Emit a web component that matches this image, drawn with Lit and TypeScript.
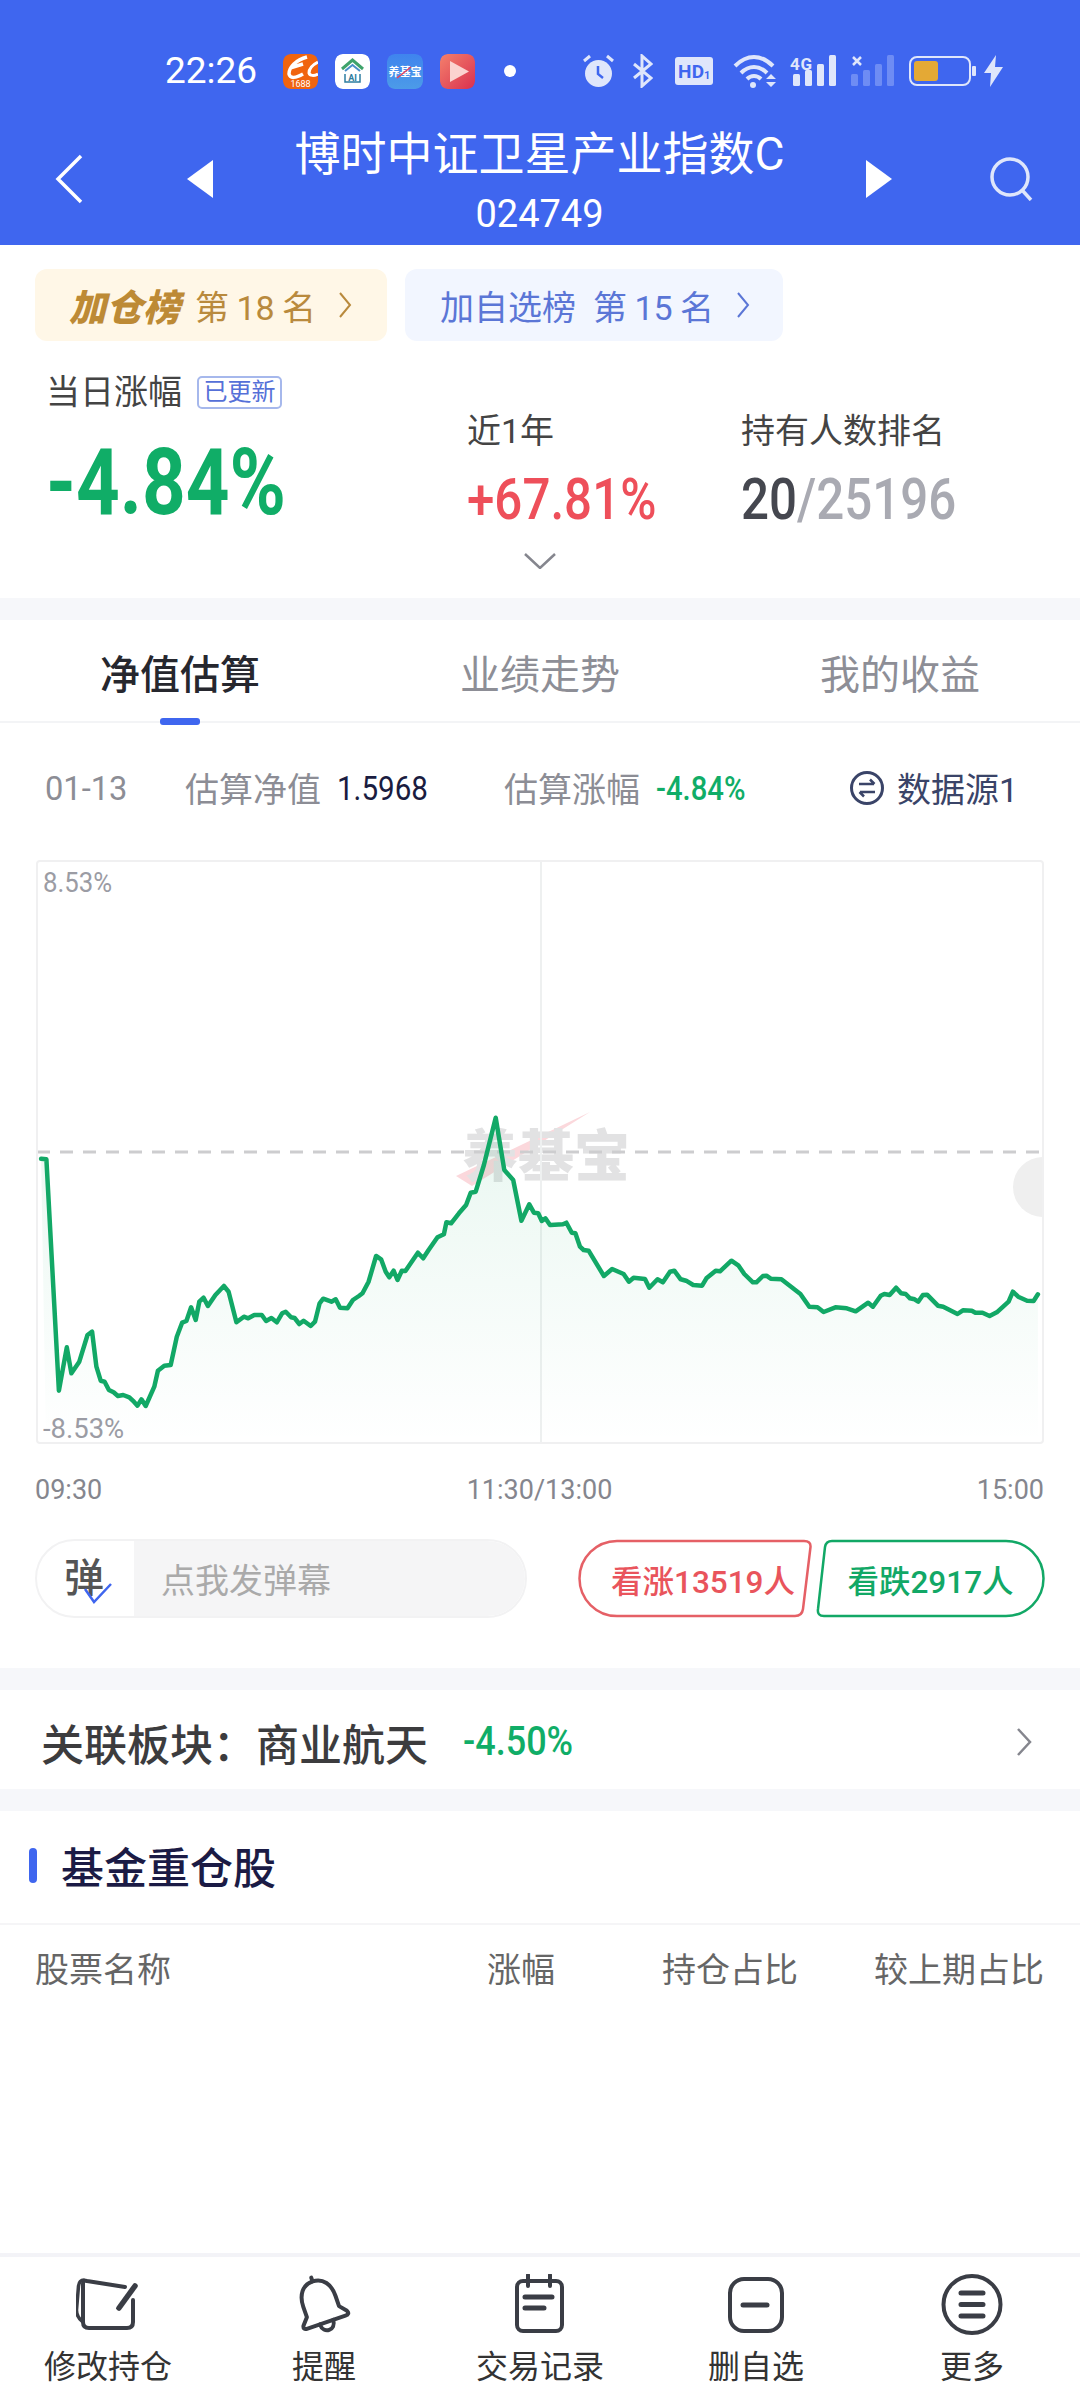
import { LitElement, html, css, svg } from "lit";
import { customElement } from "lit/decorators.js";

const a: number[][] = [[115,176],[130,178],[165,872],[187,742],[200,820],[222,785],[245,705],[258,695],[270,800],[282,842],[293,845],[305,870],[318,877],[330,888],[345,885],[362,892],[375,905],[385,917],[396,898],[408,918],[432,860],[442,812],[460,797],[478,795],[495,710],[510,668],[522,663],[535,622],[548,660],[558,605],[570,593],[582,618],[603,585],[627,558],[640,575],[662,667],[683,650],[695,655],[712,645],[733,645],[745,663],[760,654],[775,667],[790,640],[800,635],[815,652],[825,654],[838,672],[850,662],[870,678],[882,665],[895,610],[905,596],[928,605],[940,598],[952,623],[973,625],[988,600],[1005,588],[1015,580],[1032,545],[1053,468],[1067,478],[1080,515],[1090,532],[1102,512],[1113,540],[1125,512],[1135,513],[1150,490],[1170,458],[1185,475],[1200,450],[1225,412],[1243,403],[1250,367],[1263,370],[1285,340],[1305,315],[1318,278],[1332,275],[1355,195],[1388,53],[1412,210],[1437,240],[1460,362],[1482,313],[1495,338],[1507,340],[1517,363],[1527,355],[1540,375]];
const b: number[][] = [[85,375],[120,373],[130,368],[145,398],[155,400],[168,440],[178,450],[192,452],[235,528],[258,507],[290,522],[305,545],[318,533],[350,537],[362,563],[385,538],[400,547],[420,515],[432,512],[450,538],[465,542],[485,555],[510,557],[522,535],[548,512],[560,514],[592,482],[612,497],[628,522],[652,547],[662,547],[680,528],[690,527],[702,536],[732,538],[785,582],[810,620],[833,622],[850,636],[883,622],[915,625],[940,634],[975,608],[988,620],[1010,587],[1020,582],[1035,585],[1053,563],[1067,580],[1080,582],[1092,595],[1105,598],[1115,605],[1128,585],[1140,584],[1170,617],[1185,620],[1225,642],[1240,631],[1265,632],[1275,638],[1295,638],[1315,648],[1335,637],[1368,605],[1380,575],[1395,590],[1420,602],[1438,603],[1450,583]];
const pts = [
  ...a.map(([x, y]) => [x / 2.8, y / 3 + 1100]),
  ...b.map(([x, y]) => [x / 2.8 + 520, y / 3 + 1100]),
].map(([x, y]) => `${x.toFixed(1)},${y.toFixed(1)}`);
const linePts = pts.join(" ");
const areaPts = `46,1443 ${linePts} 1038,1443`;

const tabIcons = [
  svg`<path d="M58 26V48Q58 54 52 54H14Q8 54 8 48V10Q8 6 12 7L50 13"/><path d="M9 6C6 6 4 8 3.500 12L1.500 36Q1.500 43 8 48" stroke-width="3.500"/><path d="M60 12L44 34" stroke-width="5.500"/>`,
  svg`<g transform="rotate(-19 32 32)"><path d="M32 6C21 6 15 15 15 27V38L9 45Q7 49 12 49H52Q57 49 55 45L49 38V27C49 15 43 6 32 6Z"/><path d="M32 2V6"/><path d="M25 49C25 60 39 60 39 49"/></g>`,
  svg`<rect x="10" y="7" width="45" height="50" rx="6"/><path d="M21 1V12M43 1V12"/><path d="M18 23H45M18 34H37" stroke-width="5"/>`,
  svg`<rect x="7" y="5" width="52" height="52" rx="14"/><path d="M20 31H44" stroke-width="5"/>`,
  svg`<circle cx="32" cy="30.500" r="28.500"/><path d="M21 19H43M21 30.500H43M21 42H43" stroke-width="5"/>`,
];
const tabLabels = ["修改持仓", "提醒", "交易记录", "删自选", "更多"];
const tabBoxes = ["1 0 64 61", "3 0 64 61", "1 0 64 61", "1 0 64 61", "0 0 64 61"];
const relatedName = "关联板块\uFF1A商业航天";

@customElement("app-root")
export class AppRoot extends LitElement {
  static styles = css`
    :host { display: block; width: 1080px; height: 2400px; background: #fff; font-family: Roboto, "Noto Sans CJK SC", sans-serif; color: #333; overflow: hidden; }
    * { box-sizing: border-box; }
    .page { display: flex; flex-direction: column; height: 2400px; }
    .cond { display: inline-block; transform-origin: left center; white-space: nowrap; }
    svg { display: block; flex: none; }

    .header { background: #3f66ef; height: 245px; color: #fff; flex: none; }
    .status { height: 110px; padding: 32px 0 0 165px; display: flex; align-items: center; }
    .time { font-size: 37px; line-height: 36px; width: 118px; }
    .app { margin-right: 17px; border-radius: 8px; }
    .sys-dot { width: 12px; height: 12px; border-radius: 50%; background: #fff; margin: 0 67px 0 12px; }
    .nav { height: 135px; padding-top: 3px; display: flex; align-items: center; }
    .nav-l { display: flex; align-items: center; padding-left: 55px; gap: 104px; }
    .nav-r { display: flex; align-items: center; padding-right: 47px; gap: 98px; }
    .nav-t { flex: 1; text-align: center; padding-top: 7px; }
    .title { font-size: 46px; line-height: 50px; }
    .code { font-size: 38px; line-height: 44px; margin-top: 13px; }

    .chips { display: flex; gap: 18px; padding: 24px 36px 0 35px; flex: none; }
    .chip { height: 72px; border-radius: 12px; display: flex; align-items: center; font-size: 34px; }
    .chip.gold { width: 352px; background: #fff7e7; color: #b98a3d; padding-left: 34px; }
    .chip.blue { width: 378px; background: #f2f6ff; color: #5b76d6; padding-left: 35px; }
    .hot { font-style: italic; font-weight: 900; font-size: 37px; color: #bd8a35; margin-right: 15px; white-space: nowrap; }
    .rank { word-spacing: -1px; margin-left: 17px; white-space: nowrap; }
    .chip.gold .rank { margin-left: 0; }
    .chip svg { margin-left: 22px; }

    .hero { height: 257px; flex: none; overflow: hidden; }
    .hero-row { display: flex; height: 187px; }
    .hero-a { width: 467px; padding: 33px 0 0 46px; }
    .hero-b { width: 274px; padding-top: 72px; }
    .hero-c { padding-top: 72px; }
    .lbl { font-size: 34px; line-height: 36px; color: #444; white-space: nowrap; }
    .lbl-row { display: flex; align-items: center; }
    .badge { margin-left: 15px; border: 2px solid #a6b8ec; border-radius: 5px; font-size: 24px; line-height: 29px; height: 33px; width: 85px; text-align: center; color: #5570d8; }
    .big { font-size: 93px; line-height: 90px; margin-top: 28px; font-weight: 700; color: #10ad67; transform: scaleX(.82); }
    .mid { font-size: 58px; line-height: 54px; margin-top: 23px; font-weight: 500; transform: scaleX(.85); }
    .red { color: #ee4f5a; }
    .dark { color: #45474f; }
    .grey { color: #a9aab2; }
    .more { margin: 25px auto 0; }

    .gap { height: 22px; background: #f6f7fa; flex: none; }

    .tabs { height: 103px; border-bottom: 2px solid #f3f4f6; display: grid; grid-template-columns: repeat(3, 360px); font-size: 40px; color: #8d8e96; flex: none; }
    .tab { position: relative; display: flex; align-items: center; justify-content: center; padding-top: 2px; }
    .tab.on { color: #26272e; font-weight: 500; }
    .tab.on::after { content: ""; position: absolute; left: 160px; bottom: -4px; width: 40px; height: 7px; border-radius: 3px; background: #3f66ef; }

    .info { height: 137px; padding: 0 62px 8px 45px; display: flex; align-items: center; font-size: 34px; color: #8c8d95; flex: none; }
    .d { width: 140px; transform: scaleX(.96); }
    .k { width: 152px; }
    .v { width: 167px; color: #1a1c40; transform: scaleX(.87); }
    .p { width: 100px; color: #10ad67; font-weight: 500; transform: scaleX(.86); }
    .src { margin-left: auto; display: flex; align-items: center; gap: 12px; color: #3a4468; }

    .chart { position: relative; width: 1008px; height: 584px; margin: 0 36px; border: 2px solid #f0f0f1; border-radius: 4px; overflow: hidden; flex: none; }
    .chart svg { position: absolute; left: -2px; top: -2px; }
    .yl { position: absolute; left: 5px; font-size: 28px; line-height: 32px; color: #9b9ca4; transform-origin: left center; }
    .yl.top { top: 5px; transform: scaleX(.92); }
    .yl.bot { bottom: -3px; transform: scaleX(.98); }
    .wm { font-family: "Noto Sans CJK SC", sans-serif; font-size: 56px; font-weight: 900; fill: #e2e2e3; }
    .x { display: flex; justify-content: space-between; padding: 0 36px 0 35px; margin-top: 28px; font-size: 27px; line-height: 36px; color: #85868e; flex: none; }

    .act { display: flex; gap: 49px; padding: 0 35px; margin: 31px 0 50px; height: 79px; flex: none; }
    .dm { width: 492px; display: flex; border: 2px solid #f2f2f3; border-radius: 40px; overflow: hidden; flex: none; }
    .dm-i { width: 97px; position: relative; font-size: 40px; font-weight: 500; color: #555; padding-left: 27px; line-height: 75px; }
    .dm-i svg { position: absolute; left: 46px; top: 42px; }
    .dm-t { flex: 1; background: #f5f5f6; font-size: 34px; color: #aaa; display: flex; align-items: center; padding-left: 27px; }
    .vote { display: flex; gap: 4px; }
    .btn { position: relative; height: 79px; display: flex; align-items: center; justify-content: center; font-size: 31.500px; font-weight: 500; white-space: nowrap; }
    .btn svg { position: absolute; left: 0; top: 0; }
    .btn span { position: relative; }
    .btn.up { width: 236px; color: #e9545c; padding-left: 18px; }
    .btn.dn { width: 229px; color: #12a866; }

    .rel { height: 99px; padding: 4px 48px 0 41px; display: flex; align-items: center; font-size: 43px; font-weight: 500; color: #3c3c3e; flex: none; position: relative; }
    .rel .pc { margin-left: 35px; width: 130px; font-size: 40px; color: #10ad67; transform: scaleX(.9); }
    .rel svg { margin-left: auto; }

    .sec { height: 114px; border-bottom: 2px solid #f5f5f7; display: flex; align-items: center; padding-left: 29px; padding-bottom: 4px; flex: none; }
    .bar { width: 8px; height: 35px; border-radius: 4px; background: #3f66ef; margin-right: 24px; }
    .sec b { font-size: 43px; font-weight: 500; color: #1b1b45; }
    .th { height: 84px; padding: 0 36px 0 35px; display: grid; grid-template-columns: 452px 175px 212px 170px; align-items: center; font-size: 34px; color: #666; white-space: nowrap; flex: none; }
    .fill { flex: 1; }

    .tabbar { height: 147px; border-top: 4px solid #f3f3f7; padding-top: 17px; display: grid; grid-template-columns: repeat(5, 216px); flex: none; }
    .ti { display: flex; flex-direction: column; align-items: center; }
    .ti svg { fill: none; stroke: #3a3d45; stroke-width: 4; stroke-linecap: round; stroke-linejoin: round; }
    .ti span { margin-top: 14px; font-size: 32px; line-height: 36px; color: #333; }
  `;

  private statusIcons() {
    const c = "#dfe6fb";
    return html`
      <svg width="31" height="34" viewBox="0 0 31 34" style="margin-right:18px"><circle cx="15.500" cy="19.500" r="13.500" fill="${c}"/><path d="M15 12V20L20 24" stroke="#3f66ef" stroke-width="2.500" fill="none"/><path d="M1 7L7 2M30 7L24 2" stroke="${c}" stroke-width="3"/></svg>
      <svg width="21" height="34" viewBox="0 0 21 34" style="margin-right:22px"><path d="M2 10L19 24L10 32V2L19 10L2 24" stroke="${c}" stroke-width="3" fill="none"/></svg>
      <svg width="38" height="28" viewBox="0 0 38 28" style="margin-right:20px"><rect width="38" height="28" rx="3" fill="${c}"/><text x="3" y="21" font-size="19" font-weight="700" fill="#3f66ef" font-family="Roboto, sans-serif" textLength="26">HD</text><text x="29" y="22" font-size="11" font-weight="700" fill="#3f66ef" font-family="Roboto, sans-serif">1</text></svg>
      <svg width="44" height="33" viewBox="0 0 44 33" style="margin-right:13px"><path d="M2 11C14 -1 28 -1 40 11M8 18C16 10 26 10 34 18M14 24C18 20 24 20 28 24" stroke="${c}" stroke-width="4" fill="none"/><circle cx="20" cy="30" r="3" fill="${c}"/><path d="M33 24L38 19L43 24ZM33 27H43L38 32Z" fill="${c}"/></svg>
      <svg width="46" height="32" viewBox="0 0 46 32" style="margin-right:15px"><text x="0" y="15" font-size="17" font-weight="700" fill="${c}" font-family="Roboto, sans-serif" textLength="22">4G</text><rect x="3" y="19" width="7" height="12" rx="1.500" fill="${c}"/><rect x="15" y="15" width="7" height="16" rx="1.500" fill="${c}"/><rect x="27" y="9" width="7" height="22" rx="1.500" fill="${c}"/><rect x="39" y="0" width="7" height="31" rx="1.500" fill="${c}"/></svg>
      <svg width="43" height="32" viewBox="0 0 43 32" style="margin-right:15px"><path d="M2 2L10 10M10 2L2 10" stroke="${c}" stroke-width="2.500"/><g fill="#6e8cf4"><rect x="0" y="19" width="7" height="12" rx="1.500"/><rect x="12" y="15" width="7" height="16" rx="1.500"/><rect x="24" y="9" width="7" height="22" rx="1.500"/><rect x="36" y="0" width="7" height="31" rx="1.500"/></g></svg>
      <svg width="67" height="30" viewBox="0 0 67 30" style="margin-right:8px"><rect x="1" y="1" width="60" height="28" rx="7" fill="none" stroke="${c}" stroke-width="2"/><rect x="5" y="5" width="24" height="20" rx="3" fill="#e4a935"/><rect x="63" y="10" width="4" height="10" rx="1" fill="${c}"/></svg>
      <svg width="19" height="32" viewBox="0 0 19 32"><path d="M12 0L0 18H7L6 32L19 12H11Z" fill="${c}"/></svg>
    `;
  }

  render() {
    return html`<div class="page">
      <div class="header">
        <div class="status">
          <span class="time">22:26</span>
          <svg class="app" width="35" height="35" viewBox="0 0 35 35"><rect width="35" height="35" rx="7" fill="#f0640f"/><path d="M24 3C13 6 6 13 6 20C7 25 13 24 20 20M7 14L20 10" stroke="#fff" stroke-width="3.500" fill="none"/><path d="M35 8C29 11 26 15 26 19C27 22 31 22 35 20" stroke="#fff" stroke-width="3" fill="none"/><text x="17.500" y="33" text-anchor="middle" font-size="9" fill="#fff" font-family="Roboto, sans-serif">1688</text></svg>
          <svg class="app" width="35" height="35" viewBox="0 0 35 35"><rect width="35" height="35" rx="7" fill="#fff"/><path d="M7 15L17.500 6L28 15" stroke="#3fa36b" stroke-width="3" fill="none"/><path d="M10 17L17.500 11L25 17" stroke="#4a90c8" stroke-width="2" fill="none"/><path d="M10 20V28H25V20" stroke="#2c7da0" stroke-width="1.500" fill="none"/><text x="17.500" y="27" text-anchor="middle" font-size="9" font-weight="700" fill="#2c7da0" font-family="Roboto, sans-serif">AI</text></svg>
          <svg class="app" width="36" height="35" viewBox="0 0 36 35"><defs><linearGradient id="g3" x1="0" y1="0" x2="0" y2="1"><stop offset="0" stop-color="#3f84ee"/><stop offset="1" stop-color="#4c9be8"/></linearGradient></defs><rect width="36" height="35" rx="7" fill="url(#g3)"/><text x="18" y="22" text-anchor="middle" font-size="11" font-weight="700" fill="#fff" font-family="'Noto Sans CJK SC', sans-serif">养基宝</text><path d="M10 24L24 13" stroke="#e8405a" stroke-width="1.500"/></svg>
          <svg class="app" width="35" height="35" viewBox="0 0 35 35"><defs><linearGradient id="g4" x1="0" y1="0" x2="1" y2="1"><stop offset="0" stop-color="#f4806c"/><stop offset="1" stop-color="#d9304f"/></linearGradient></defs><rect width="35" height="35" rx="7" fill="url(#g4)"/><path d="M10 7L29 17.500L10 28Z" fill="#fbd3d0"/></svg>
          <span class="sys-dot"></span>
          ${this.statusIcons()}
        </div>
        <div class="nav">
          <div class="nav-l">
            <svg width="28" height="50" viewBox="0 0 28 50"><path d="M26 2L3 25L26 48" stroke="#fff" stroke-width="3.500" fill="none"/></svg>
            <svg width="26" height="38" viewBox="0 0 26 38"><path d="M26 0V38L0 19Z" fill="#fff"/></svg>
          </div>
          <div class="nav-t">
            <div class="title">博时中证卫星产业指数C</div>
            <div class="code">024749</div>
          </div>
          <div class="nav-r">
            <svg width="26" height="38" viewBox="0 0 26 38"><path d="M0 0V38L26 19Z" fill="#fff"/></svg>
            <svg width="43" height="44" viewBox="0 0 43 44"><circle cx="20" cy="20" r="18" stroke="#dfe6fb" stroke-width="3.500" fill="none"/><path d="M32 33L41 43" stroke="#dfe6fb" stroke-width="3.500"/></svg>
          </div>
        </div>
      </div>

      <div class="chips">
        <div class="chip gold"><span class="hot">加仓榜</span><span class="rank">第 18 名</span><svg width="14" height="26" viewBox="0 0 14 26"><path d="M2 1L12 13L2 25" stroke="#b98a3d" stroke-width="2" fill="none"/></svg></div>
        <div class="chip blue"><span>加自选榜</span><span class="rank">第 15 名</span><svg width="14" height="26" viewBox="0 0 14 26"><path d="M2 1L12 13L2 25" stroke="#5b76d6" stroke-width="2" fill="none"/></svg></div>
      </div>

      <div class="hero">
        <div class="hero-row">
          <div class="hero-a">
            <div class="lbl-row"><span class="lbl">当日涨幅</span><span class="badge">已更新</span></div>
            <div class="cond big">-4.84%</div>
          </div>
          <div class="hero-b">
            <div class="lbl">近1年</div>
            <div class="cond mid red">+67.81%</div>
          </div>
          <div class="hero-c">
            <div class="lbl">持有人数排名</div>
            <div class="cond mid"><span class="dark">20</span><span class="grey">/25196</span></div>
          </div>
        </div>
        <svg class="more" width="32" height="16" viewBox="0 0 32 16"><path d="M1 1L16 15L31 1" stroke="#85868e" stroke-width="2.500" fill="none"/></svg>
      </div>

      <div class="gap"></div>

      <div class="tabs">
        <div class="tab on">净值估算</div>
        <div class="tab">业绩走势</div>
        <div class="tab">我的收益</div>
      </div>

      <div class="info">
        <span class="cond d">01-13</span>
        <span class="k">估算净值</span>
        <span class="cond v">1.5968</span>
        <span class="k">估算涨幅</span>
        <span class="cond p">-4.84%</span>
        <span class="src">
          <svg width="36" height="36" viewBox="0 0 36 36"><circle cx="18" cy="18" r="15.500" stroke="#3a4468" stroke-width="3" fill="none"/><path d="M10 14H25M21 9.500L25.500 14M26 22H11M15 26.500L10.500 22" stroke="#3a4468" stroke-width="2.500" fill="none"/></svg>
          数据源1
        </span>
      </div>

      <div class="chart">
        <svg width="1008" height="584" viewBox="36 860 1008 584">
          <defs><linearGradient id="ar" gradientUnits="userSpaceOnUse" x1="0" y1="1130" x2="0" y2="1443"><stop offset="0" stop-color="#12a866" stop-opacity=".09"/><stop offset="1" stop-color="#12a866" stop-opacity="0"/></linearGradient></defs>
          <polygon points="456,1176 590,1112 472,1186" fill="#fbd8dc"/>
          <text class="wm" x="462" y="1176">养基宝</text>
          <path d="M541 860V1444" stroke="#eef0f0" stroke-width="2"/>
          <path d="M37 1152H1040" stroke="#cdcdcf" stroke-width="3" stroke-dasharray="13 10" fill="none"/>
          <circle cx="1043" cy="1187" r="30" fill="#efefef"/>
          <polygon points="${areaPts}" fill="url(#ar)"/>
          <polyline points="${linePts}" fill="none" stroke="#12a866" stroke-width="4.500" stroke-linejoin="round" stroke-linecap="round"/>
        </svg>
        <span class="yl top">8.53%</span>
        <span class="yl bot">-8.53%</span>
      </div>
      <div class="x"><span>09:30</span><span>11:30/13:00</span><span>15:00</span></div>

      <div class="act">
        <div class="dm">
          <div class="dm-i">弹<svg width="30" height="22" viewBox="0 0 30 22"><path d="M2 6L11 19L28 1" stroke="#3f66ef" stroke-width="2.500" fill="none"/></svg></div>
          <div class="dm-t">点我发弹幕</div>
        </div>
        <div class="vote">
          <div class="btn up"><svg width="236" height="79" viewBox="0 0 236 79"><path d="M41 2H228Q235 2 234.500 8L227 70Q226 77 219 77H41A37.500 37.500 0 0 1 41 2Z" fill="none" stroke="#e56066" stroke-width="2.500"/></svg><span>看涨13519人</span></div>
          <div class="btn dn"><svg width="229" height="79" viewBox="0 0 229 79"><path d="M16 2H190A37.500 37.500 0 0 1 190 77H8Q1 77 2 70L9 8Q10 2 16 2Z" fill="none" stroke="#12a866" stroke-width="2.500"/></svg><span>看跌2917人</span></div>
        </div>
      </div>

      <div class="gap"></div>

      <div class="rel">
        <span>${relatedName}</span>
        <span class="cond pc">-4.50%</span>
        <svg width="16" height="28" viewBox="0 0 16 28"><path d="M2 1L14 14L2 27" stroke="#85868e" stroke-width="2.500" fill="none"/></svg>
      </div>

      <div class="gap"></div>

      <div class="sec"><i class="bar"></i><b>基金重仓股</b></div>
      <div class="th"><span>股票名称</span><span>涨幅</span><span>持仓占比</span><span>较上期占比</span></div>
      <div class="fill"></div>

      <div class="tabbar">
        ${tabIcons.map((ic, i) => html`<div class="ti"><svg width="64" height="61" viewBox="${tabBoxes[i]}">${ic}</svg><span>${tabLabels[i]}</span></div>`)}
      </div>
    </div>`;
  }
}
